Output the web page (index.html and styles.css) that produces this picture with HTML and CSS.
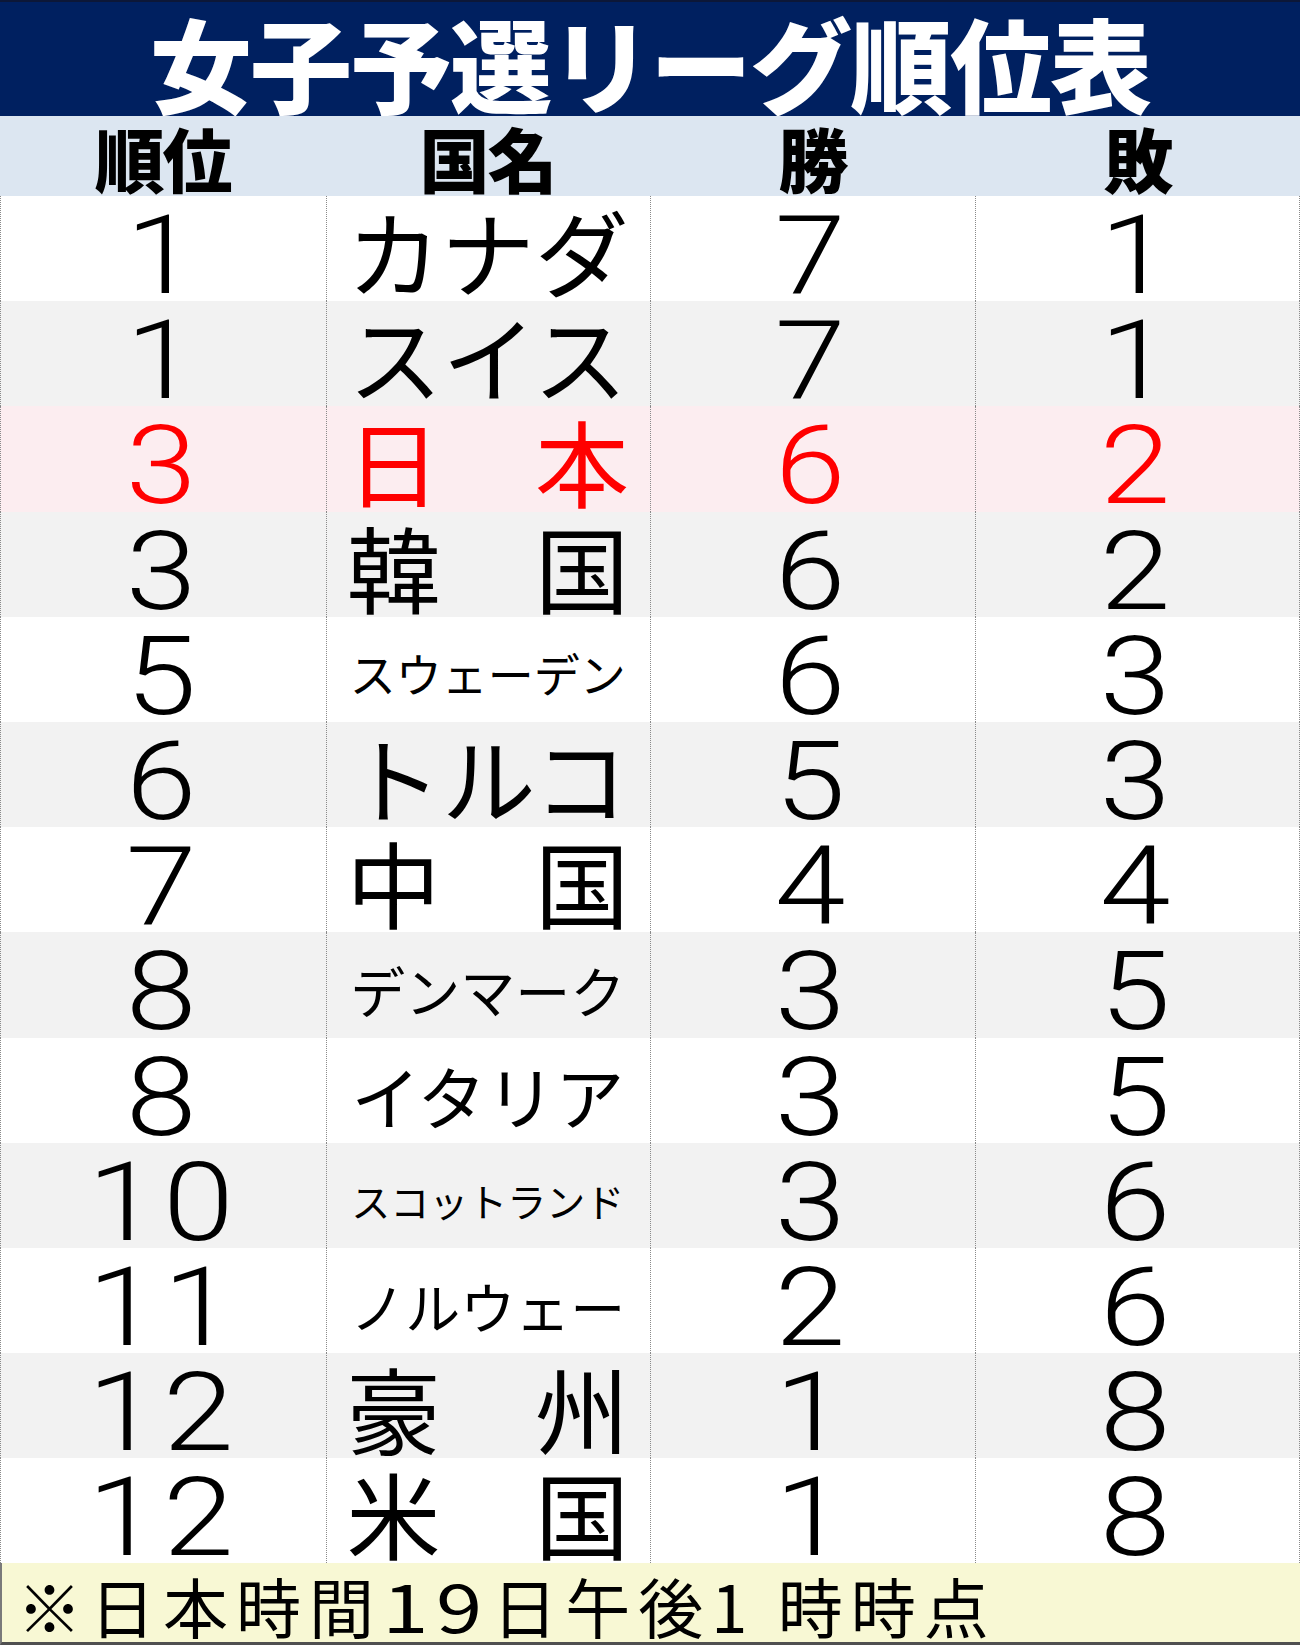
FILE: index.html
```html
<!DOCTYPE html>
<html lang="ja">
<head>
<meta charset="utf-8">
<title>女子予選リーグ順位表</title>
<link rel="stylesheet" href="styles.css">
</head>
<body>
<div class="board">
  <h1 class="title">女子予選リーグ順位表</h1>
  <div class="head">
    <div class="hcell">順位</div>
    <div class="hcell">国名</div>
    <div class="hcell">勝</div>
    <div class="hcell">敗</div>
  </div>
  <div class="rows">
    <div class="row">
      <div class="cell num"><span>1</span></div>
      <div class="cell name big">カナダ</div>
      <div class="cell num"><span>7</span></div>
      <div class="cell num"><span>1</span></div>
    </div>
    <div class="row alt">
      <div class="cell num"><span>1</span></div>
      <div class="cell name big">スイス</div>
      <div class="cell num"><span>7</span></div>
      <div class="cell num"><span>1</span></div>
    </div>
    <div class="row jp">
      <div class="cell num"><span>3</span></div>
      <div class="cell name big k2"><span>日</span><span>本</span></div>
      <div class="cell num"><span>6</span></div>
      <div class="cell num"><span>2</span></div>
    </div>
    <div class="row alt">
      <div class="cell num"><span>3</span></div>
      <div class="cell name big k2"><span>韓</span><span>国</span></div>
      <div class="cell num"><span>6</span></div>
      <div class="cell num"><span>2</span></div>
    </div>
    <div class="row">
      <div class="cell num"><span>5</span></div>
      <div class="cell name f46">スウェーデン</div>
      <div class="cell num"><span>6</span></div>
      <div class="cell num"><span>3</span></div>
    </div>
    <div class="row alt">
      <div class="cell num"><span>6</span></div>
      <div class="cell name big">トルコ</div>
      <div class="cell num"><span>5</span></div>
      <div class="cell num"><span>3</span></div>
    </div>
    <div class="row">
      <div class="cell num"><span>7</span></div>
      <div class="cell name big k2"><span>中</span><span>国</span></div>
      <div class="cell num"><span>4</span></div>
      <div class="cell num"><span>4</span></div>
    </div>
    <div class="row alt">
      <div class="cell num"><span>8</span></div>
      <div class="cell name f55">デンマーク</div>
      <div class="cell num"><span>3</span></div>
      <div class="cell num"><span>5</span></div>
    </div>
    <div class="row">
      <div class="cell num"><span>8</span></div>
      <div class="cell name f69">イタリア</div>
      <div class="cell num"><span>3</span></div>
      <div class="cell num"><span>5</span></div>
    </div>
    <div class="row alt">
      <div class="cell num"><span>10</span></div>
      <div class="cell name f39">スコットランド</div>
      <div class="cell num"><span>3</span></div>
      <div class="cell num"><span>6</span></div>
    </div>
    <div class="row">
      <div class="cell num"><span>11</span></div>
      <div class="cell name f55">ノルウェー</div>
      <div class="cell num"><span>2</span></div>
      <div class="cell num"><span>6</span></div>
    </div>
    <div class="row alt">
      <div class="cell num"><span>12</span></div>
      <div class="cell name big k2"><span>豪</span><span>州</span></div>
      <div class="cell num"><span>1</span></div>
      <div class="cell num"><span>8</span></div>
    </div>
    <div class="row">
      <div class="cell num"><span>12</span></div>
      <div class="cell name big k2"><span>米</span><span>国</span></div>
      <div class="cell num"><span>1</span></div>
      <div class="cell num"><span>8</span></div>
    </div>
  </div>
  <p class="note">※日本時間<span class="fd">19</span>日午後1 時時点</p>
</div>
</body>
</html>
```
FILE: styles.css
```css
* { box-sizing: border-box; }
html, body { margin: 0; padding: 0; }
body {
  width: 1300px;
  height: 1645px;
  background: #ffffff;
  font-family: "Noto Sans CJK JP", "Noto Sans", sans-serif;
  color: #000;
  overflow: hidden;
}
.board { width: 1300px; }

.title {
  margin: 0;
  height: 116px;
  background: #002060;
  border-top: 2px solid #0c1738;
  color: #ffffff;
  font-weight: 900;
  font-size: 102px;
  letter-spacing: -2px;
  line-height: 108px;
  padding-top: 6px;
  text-align: center;
  white-space: nowrap;
  overflow: hidden;
}

.head {
  height: 80px;
  background: #dce6f1;
  display: grid;
  grid-template-columns: repeat(4, 1fr);
  grid-template-rows: minmax(0, 1fr);
  font-weight: 900;
  font-size: 70px;
  letter-spacing: -2px;
}
.hcell {
  display: flex;
  align-items: center;
  justify-content: center;
  padding-top: 3px;
  line-height: 1;
  min-height: 0;
}

.row {
  height: 105.2px;
  display: grid;
  grid-template-columns: repeat(4, 1fr);
  grid-template-rows: minmax(0, 1fr);
  border-left: 1px dotted #8a8a8a;
  border-right: 1px dotted #8a8a8a;
  background: #ffffff;
}
.row.alt { background: #f2f2f2; }
.row.jp { background: #fcedf0; color: #ff0000; }

.cell {
  display: flex;
  align-items: center;
  justify-content: center;
  line-height: 1;
  white-space: nowrap;
  min-height: 0;
}
.cell + .cell { border-left: 1px dotted #8a8a8a; }

.num {
  font-family: Roboto, "Liberation Sans", sans-serif;
  font-size: 110px;
  font-weight: 300;
  padding-top: 15px;
}
.num span {
  display: inline-block;
  transform: scaleX(1.16);
  letter-spacing: 4px;
}

.name {
  font-weight: 400;
  padding: 0 21px 0 20px;
}
.name.k2 { justify-content: space-between; }
.big { font-size: 94px; padding-top: 3px; }
.f69 { font-size: 69px; padding-top: 10px; }
.f55 { font-size: 55px; padding-top: 10px; }
.f46 { font-size: 46px; padding-top: 6px; }
.f39 { font-size: 39px; padding-top: 10px; }

.note {
  margin: 0;
  height: 81.4px;
  background: #f8f8d4;
  border-left: 2px solid #7a7a7a;
  border-bottom: 3px solid #505050;
  font-size: 65px;
  letter-spacing: 8px;
  line-height: 1;
  padding: 6px 0 0 15px;
  display: flex;
  align-items: center;
  white-space: nowrap;
}
.note .fd {
  display: inline-block;
  transform: scaleX(1.28);
  margin: 0 14px 0 12px;
  letter-spacing: 6px;
}
```
